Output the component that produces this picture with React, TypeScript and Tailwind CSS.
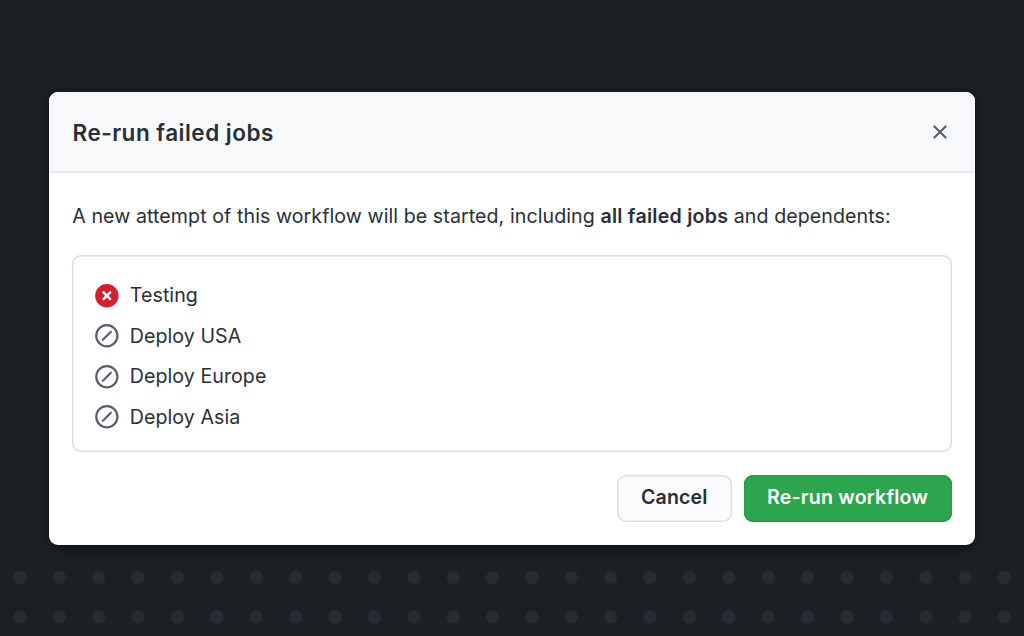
const jobs = [
  { name: 'Testing', failed: true },
  { name: 'Deploy USA', failed: false },
  { name: 'Deploy Europe', failed: false },
  { name: 'Deploy Asia', failed: false },
];

function FailedIcon() {
  return (
    <svg viewBox="0 0 16 16" className="size-[23.4px] shrink-0 overflow-visible" aria-hidden="true">
      <circle cx="8.1" cy="8" r="8" fill="#cf222e" />
      <path d="M5.8 5.7l4.6 4.6M10.4 5.7l-4.6 4.6" stroke="#fff" strokeWidth="1.6" strokeLinecap="round" />
    </svg>
  );
}

function SkippedIcon() {
  return (
    <svg viewBox="0 0 16 16" className="size-[23.4px] shrink-0 overflow-visible" fill="none" stroke="#57606a" aria-hidden="true">
      <circle cx="8.1" cy="8" r="7.25" strokeWidth="1.5" />
      <path d="M10.85 5.25l-5.5 5.5" strokeWidth="1.5" strokeLinecap="round" />
    </svg>
  );
}

function Dots() {
  return (
    <svg className="absolute bottom-0 left-0 h-[79px] w-full" aria-hidden="true">
      <defs>
        <pattern id="dots" x="0.3" y="0.9" width="39.38" height="39.38" patternUnits="userSpaceOnUse">
          <circle cx="19.69" cy="19.69" r="6.6" fill="#282c32" />
        </pattern>
      </defs>
      <rect width="100%" height="100%" fill="url(#dots)" />
    </svg>
  );
}

export default function App() {
  return (
    <div className="relative h-[636px] w-[1024px] overflow-hidden bg-[#1c1f23] pt-[92px] pl-[49px] font-['Inter',sans-serif] text-[#2a2f36]">
      <Dots />
      <section className="relative flex h-[453px] w-[925.5px] flex-col overflow-hidden rounded-[9px] bg-white shadow-[0_4px_10px_rgba(0,0,0,0.4)]">
        <header className="flex h-[81px] shrink-0 items-center justify-between bg-[#f6f8fa] pr-[28px] pl-[23.5px] shadow-[inset_0_-1.5px_0_#e3e6ea]">
          <h1 className="pt-[2px] text-[22.5px] leading-none font-semibold tracking-[0.5px]">Re-run failed jobs</h1>
          <button aria-label="Close" className="pb-px">
            <svg viewBox="0 0 14 14" className="size-[14px]" fill="none" stroke="#57606a" strokeWidth="2.1" strokeLinecap="round" aria-hidden="true">
              <path d="M1.4 1.4l11.2 11.2M12.6 1.4L1.4 12.6" />
            </svg>
          </button>
        </header>
        <div className="flex flex-col pr-[23px] pl-[23.25px] pt-[31px]">
          <p className="text-[19.6px] leading-[25px] tracking-[0.08px] whitespace-nowrap">
            A new attempt of this workflow will be started, including <strong className="font-semibold tracking-[0.25px]">all failed jobs</strong> and dependents:
          </p>
          <ul className="mt-[26px] flex h-[196.5px] flex-col rounded-[9px] pt-[20px] pl-[23px] shadow-[inset_0_0_0_1.5px_#d8dee4]">
            {jobs.map((job) => (
              <li key={job.name} className="flex h-[40.5px] items-center gap-[11.2px]">
                {job.failed ? <FailedIcon /> : <SkippedIcon />}
                <span className="text-[19.6px] leading-[20px] tracking-[0.06px]">{job.name}</span>
              </li>
            ))}
          </ul>
          <div className="mt-[23px] flex justify-end gap-3">
            <button className="h-[47.5px] w-[114.5px] rounded-[9px] bg-[#fafbfc] text-[19.6px] leading-none font-semibold tracking-[0.1px] shadow-[inset_0_0_0_1.5px_#dcdfe2]">Cancel</button>
            <button className="h-[47.5px] w-[208px] rounded-[9px] bg-[#2da44e] text-[19.6px] leading-none font-semibold tracking-[0.2px] text-white shadow-[inset_0_0_0_1.5px_#2b984a]">Re-run workflow</button>
          </div>
        </div>
      </section>
    </div>
  );
}
